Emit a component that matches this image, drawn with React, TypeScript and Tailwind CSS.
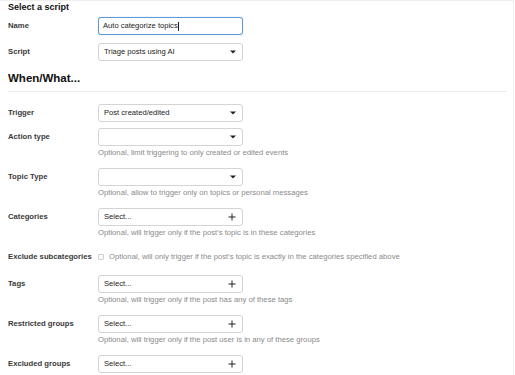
const font = { fontFamily: '"Liberation Sans", Arial, sans-serif' };

type Row = {
  label: string;
  kind: 'select' | 'multi' | 'check';
  value?: string;
  help?: string;
};

const rows: Row[] = [
  { label: 'Trigger', kind: 'select', value: 'Post created/edited' },
  { label: 'Action type', kind: 'select', help: 'Optional, limit triggering to only created or edited events' },
  { label: 'Topic Type', kind: 'select', help: 'Optional, allow to trigger only on topics or personal messages' },
  { label: 'Categories', kind: 'multi', help: "Optional, will trigger only if the post's topic is in these categories" },
  { label: 'Exclude subcategories', kind: 'check', help: "Optional, will only trigger if the post's topic is exactly in the categories specified above" },
  { label: 'Tags', kind: 'multi', help: 'Optional, will trigger only if the post has any of these tags' },
  { label: 'Restricted groups', kind: 'multi', help: 'Optional, will trigger only if the post user is in any of these groups' },
  { label: 'Excluded groups', kind: 'multi' },
];

function Caret() {
  return (
    <svg width="6" height="4" viewBox="0 0 6 4" className="shrink-0">
      <path d="M0 0.5 L6 0.5 L3 3.5 Z" fill="#222" />
    </svg>
  );
}

function Plus() {
  return (
    <svg width="8" height="8" viewBox="0 0 8 8" className="shrink-0">
      <path d="M4 0.5 V7.5 M0.5 4 H7.5" stroke="#222" strokeWidth="1" />
    </svg>
  );
}

function Box({ children, icon }: { children?: React.ReactNode; icon: 'caret' | 'plus' }) {
  return (
    <div className="flex h-[18px] w-[145px] items-center justify-between rounded-[3px] border border-[#d4d4d4] bg-white pl-[5px] pr-[6px] text-[7.6px] text-[#222]">
      <span>{children}</span>
      {icon === 'caret' ? <Caret /> : <Plus />}
    </div>
  );
}

function Label({ text }: { text: string }) {
  return <div className="w-[90px] shrink-0 text-[7.7px] font-bold text-[#3a3a3a]">{text}</div>;
}

function FieldRow({ row }: { row: Row }) {
  if (row.kind === 'check') {
    return (
      <div className="mb-[9px] flex h-[18px] items-center">
        <Label text={row.label} />
        <div className="flex items-center">
          <div className="mr-[5px] h-[6px] w-[6px] rounded-[1px] border border-[#cfcfcf] bg-white" />
          <span className="text-[7.7px] text-[#8a8a8a]">{row.help}</span>
        </div>
      </div>
    );
  }
  return (
    <div className={row.help ? 'mb-[9px]' : 'mb-[6px]'}>
      <div className="flex items-center">
        <Label text={row.label} />
        <Box icon={row.kind === 'select' ? 'caret' : 'plus'}>
          {row.kind === 'multi' ? 'Select...' : row.value}
        </Box>
      </div>
      {row.help && (
        <div className="ml-[90px] mt-[1px] h-[12px] text-[7.7px] leading-[12px] text-[#8a8a8a]">{row.help}</div>
      )}
    </div>
  );
}

export default function App() {
  return (
    <div style={font} className="h-[375px] w-[515px] overflow-hidden bg-white">
      <div className="h-full w-[514px] border-r border-t border-[#eeeeee] pl-[8px]">
        <div className="pt-[1px] text-[9px] font-bold leading-[11px] text-[#111]">Select a script</div>

        <div className="mt-[4px] mb-[8px] flex items-center">
          <Label text="Name" />
          <div className="flex h-[18px] w-[145px] items-center rounded-[3px] border border-[#5e9ad6] bg-white pl-[4px] text-[7.6px] text-[#222] shadow-[0_0_1px_#8ab6e6]">
            Auto categorize topics<span className="ml-[0.5px] h-[9px] w-px bg-[#222]" />
          </div>
        </div>

        <div className="flex items-center">
          <Label text="Script" />
          <Box icon="caret">Triage posts using AI</Box>
        </div>

        <div className="mt-[10px] text-[11.5px] font-bold leading-[14px] text-[#111]">When/What...</div>
        <div className="mt-[6px] mb-[12px] mr-[6px] border-t border-[#ececec]" />

        {rows.map((r) => (
          <FieldRow key={r.label} row={r} />
        ))}
      </div>
    </div>
  );
}
